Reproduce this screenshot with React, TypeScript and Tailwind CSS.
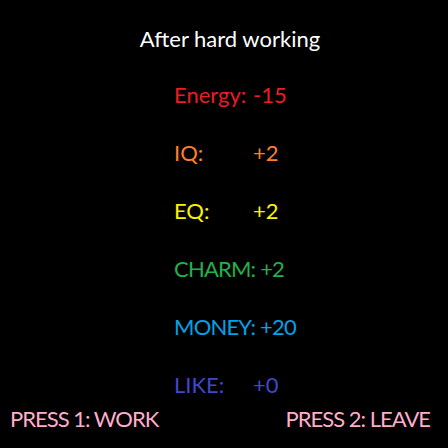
export default function App() {
    const stats = [
        { label: "Energy:", value: "-15", color: "text-[#ed1c24]", wide: false },
        { label: "IQ:", value: "+2", color: "text-[#ff7f27]", wide: false },
        { label: "EQ:", value: "+2", color: "text-[#fff200]", wide: false },
        { label: "CHARM:", value: "+2", color: "text-[#22b14c]", wide: true },
        { label: "MONEY:", value: "+20", color: "text-[#00a2e8]", wide: true },
        { label: "LIKE:", value: "+0", color: "text-[#3f48cc]", wide: false },
    ];

    return (
        <div className="w-[448px] h-[448px] bg-black overflow-hidden flex flex-col pt-[25px] font-['Lato',sans-serif] text-[22px] leading-[28px]">
            <h1 className="text-white text-center pl-[12px] mb-[28px]">After hard working</h1>
            <div className="flex flex-col gap-[30px] pl-[174px]">
                {stats.map((s) => (
                    <div key={s.label} className={`flex ${s.color}`}>
                        {s.wide ? (
                            <span className="tracking-[-0.8px]">{s.label}&nbsp;{s.value}</span>
                        ) : (
                            <>
                                <span className="w-[79px]">{s.label}</span>
                                <span>{s.value}</span>
                            </>
                        )}
                    </div>
                ))}
            </div>
            <div className="flex justify-between pl-[10px] pr-[18px] mt-[6px] text-[#ffaec9] tracking-[-1px]">
                <span>PRESS 1: WORK</span>
                <span>PRESS 2: LEAVE</span>
            </div>
        </div>
    )
}
